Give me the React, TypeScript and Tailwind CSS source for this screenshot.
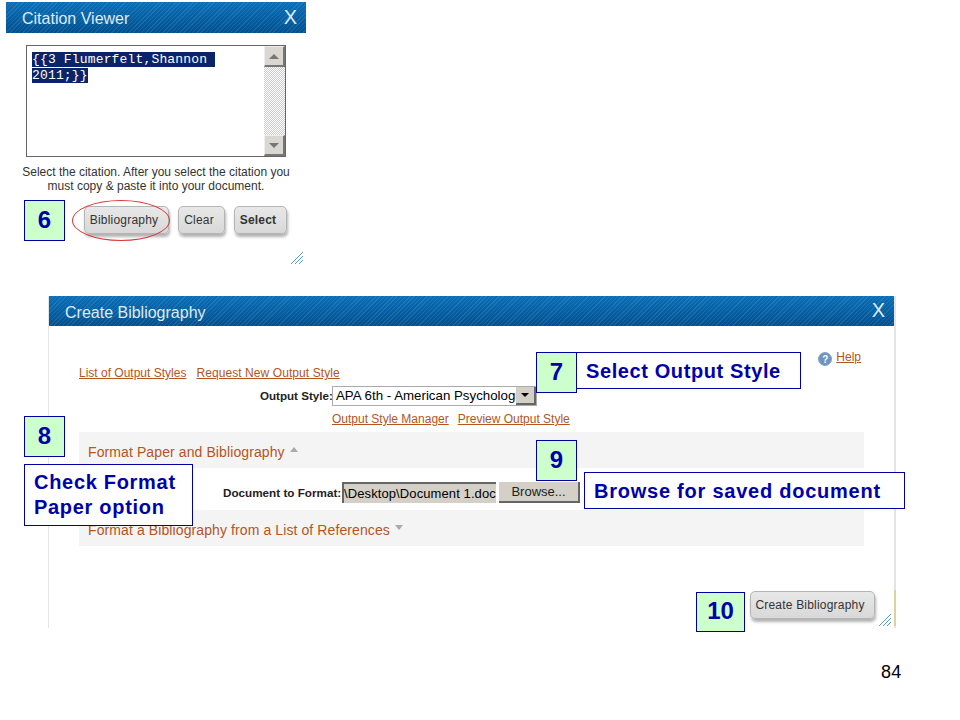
const titleBar =
  "flex items-center justify-between bg-[repeating-linear-gradient(135deg,rgba(255,255,255,0.09)_0px,rgba(255,255,255,0.09)_1px,transparent_1px,transparent_3px),linear-gradient(180deg,#0b6fb8,#00508f)] text-[#dcebf6]";

const link = "text-[12px] leading-4 text-[#b4551e] underline whitespace-nowrap";

const grayButton =
  "flex items-center justify-center rounded-[5px] border border-[#b4b4b4] bg-gradient-to-b from-[#e8e8e8] to-[#d8d8d8] pr-[5px] text-[12px] tracking-[0.2px] text-[#333] shadow-[1px_3px_3px_rgba(0,0,0,0.3)]";

// numbered green squares and blue note boxes sit on top of the slide
const stepBox =
  "absolute flex items-center justify-center border border-[#0000a0] bg-[#ccffcc] pb-[2px] text-[24px] font-bold text-[#0000aa]";
const noteBox =
  "absolute flex items-center border border-[#0000a0] bg-white pl-[9px] text-[20px] leading-[25px] font-bold text-[#0000aa]";

const ResizeGrip = ({ className }: { className: string }) => (
  <svg className={className} width="12" height="12" viewBox="0 0 12 12" fill="none" stroke="#5b9bd0" strokeWidth="1">
    <path d="M0 12 L12 0 M4 12 L12 4 M8 12 L12 8" />
  </svg>
);

const ScrollArrow = ({ up }: { up?: boolean }) => (
  <div className="flex h-[21px] w-[21px] items-center justify-center border-t border-l border-t-[#eee] border-l-[#eee] border-r-2 border-b-2 border-r-[#777] border-b-[#777] bg-[#d9d7d0]">
    <div
      className={
        up
          ? "h-0 w-0 border-x-[5px] border-b-[5px] border-x-transparent border-b-[#777]"
          : "h-0 w-0 border-x-[5px] border-t-[5px] border-x-transparent border-t-[#777]"
      }
    />
  </div>
);

const CitationViewer = () => (
  <div className="absolute top-[2px] left-[6px] h-[264px] w-[300px]">
    <div className={`${titleBar} h-[31px] pr-[9px] pl-4`}>
      <span className="pt-[3px] text-[16px]">Citation Viewer</span>
      <span className="-mt-[1px] text-[20px]">X</span>
    </div>
    <div className="mt-3 ml-5 flex h-[112px] w-[260px] justify-between border border-[#666] bg-white">
      <div className="w-[190px] pt-[6px] pl-[5px] font-['Liberation_Mono',monospace] text-[13px] leading-4 tracking-[0.16px] text-white">
        <span className="bg-[#0a246a] pr-2 whitespace-pre">{"{{3 Flumerfelt,Shannon"}</span>
        <br />
        <span className="bg-[#0a246a] whitespace-pre">{"2011;}}"}</span>
      </div>
      <div className="flex w-[21px] flex-col justify-between bg-[conic-gradient(#ccc_25%,#fff_0_50%,#ccc_0_75%,#fff_0)] bg-[length:2px_2px]">
        <ScrollArrow up />
        <ScrollArrow />
      </div>
    </div>
    <p className="mt-2 text-center text-[12px] leading-[14px] text-[#333]">
      Select the citation. After you select the citation you
      <br />
      must copy &amp; paste it into your document.
    </p>
    <div className="mt-[13px] ml-[78px] flex gap-[9px]">
      <button className={`${grayButton} h-[28px] w-[85px]`}>Bibliography</button>
      <button className={`${grayButton} h-[28px] w-[47px]`}>Clear</button>
      <button className={`${grayButton} h-[28px] w-[53px] font-bold`}>Select</button>
    </div>
    <ResizeGrip className="absolute right-[3px] bottom-[2px]" />
  </div>
);

const CreateBibliography = () => (
  <div className="absolute top-[296px] left-[48px] h-[332px] w-[848px] border-x border-x-[#e4e4e4] border-r-2">
    <div className={`${titleBar} h-[30px] pr-[9px] pl-4`}>
      <span className="pt-[3px] text-[16px]">Create Bibliography</span>
      <span className="-mt-[2px] text-[20px]">X</span>
    </div>

    <div className="flex items-start justify-between pt-[22px] pr-[33px] pl-[30px]">
      <div className="mt-[17px] flex gap-[10px]">
        <span className={link}>List of Output Styles</span>
        <span className={`${link} tracking-[0.08px]`}>Request New Output Style</span>
      </div>
      <div className="flex items-start gap-1 pt-[1px]">
        <div className="mt-[3px] flex h-[14px] w-[14px] items-center justify-center rounded-full border border-[#8aa4c4] bg-[#6f94c2] text-[10px] font-bold text-white">
          ?
        </div>
        <span className={link}>Help</span>
      </div>
    </div>

    <div className="mt-[4px] flex h-[20px] items-center pt-[1px] pl-[211px]">
      <span className="w-[72px] pt-[1px] text-[11.6px] font-bold text-[#222] whitespace-nowrap">Output Style:</span>
      <div className="flex h-[20px] w-[205px] items-center justify-between border border-[#aaa] bg-white pl-[3px]">
        <span className="w-[180px] overflow-hidden text-[13.3px] whitespace-nowrap text-black">
          APA 6th - American Psychological
        </span>
        <div className="flex h-[18px] w-[20px] items-center justify-center border-r-2 border-b-2 border-r-[#666] border-b-[#666] bg-[#d4d0c8]">
          <div className="h-0 w-0 border-x-[4px] border-t-[4px] border-x-transparent border-t-black" />
        </div>
      </div>
    </div>

    <div className="mt-[6px] flex gap-[9px] pl-[283px]">
      <span className={link}>Output Style Manager</span>
      <span className={link}>Preview Output Style</span>
    </div>

    <div className="mt-[5px] ml-[30px] flex h-[36px] w-[785px] items-center gap-[5px] bg-[#f4f4f4] pt-[4px] pl-[9px]">
      <span className="text-[14px] tracking-[0.1px] text-[#b4551e]">Format Paper and Bibliography</span>
      <div className="mb-[5px] h-0 w-0 border-x-[4px] border-b-[5px] border-x-transparent border-b-[#aaa]" />
    </div>

    <div className="flex h-[42px] items-start pt-[14px] pl-[174px]">
      <span className="w-[119px] text-[11.7px] leading-[21px] font-bold text-[#222] whitespace-nowrap">
        Document to Format:
      </span>
      <div className="flex h-[21px] w-[154px] items-center overflow-hidden border-t-2 border-l-2 border-t-[#666] border-l-[#666] bg-[#d4d0c8] text-[13px] tracking-[0.1px] whitespace-nowrap text-black">
        \Desktop\Document 1.doc
      </div>
      <div className="ml-[3px] flex h-[21px] w-[81px] items-center justify-center border-r-2 border-b-2 border-r-[#666] border-b-[#666] bg-[#d4d0c8] text-[13px] text-[#222]">
        Browse...
      </div>
    </div>

    <div className="ml-[30px] flex h-[36px] w-[785px] items-center gap-[5px] bg-[#f4f4f4] pt-[4px] pl-[9px]">
      <span className="text-[14px] tracking-[0.1px] text-[#b4551e]">Format a Bibliography from a List of References</span>
      <div className="mb-[5px] h-0 w-0 border-x-[4px] border-t-[5px] border-x-transparent border-t-[#aaa]" />
    </div>

    <button className={`${grayButton} mt-[45px] ml-auto mr-[19px] h-[28px] w-[125px]`}>Create Bibliography</button>
    <ResizeGrip className="absolute right-[3px] bottom-[2px]" />
    <div className="absolute top-[294px] -right-[2px] h-[36px] w-[2px] bg-[#d9d59a]" />
  </div>
);

export default function App() {
  return (
    <div className="relative h-[720px] w-[960px] overflow-hidden bg-white font-['Liberation_Sans',Arial,sans-serif]">
      <CitationViewer />
      <CreateBibliography />

      {/* red circle round the Bibliography button */}
      <div className="absolute top-[200px] left-[72px] h-[41px] w-[98px] rounded-[50%] border border-[#d8393c]" />

      <div className={`${stepBox} top-[200px] left-[24px] h-[41px] w-[41px]`}>6</div>
      <div className={`${noteBox} top-[352px] left-[576px] h-[37px] w-[225px] pt-[1px] tracking-[0.6px]`}>Select Output Style</div>
      <div className={`${stepBox} top-[352px] left-[536px] h-[41px] w-[41px]`}>7</div>
      <div className={`${stepBox} top-[416px] left-[24px] h-[41px] w-[41px]`}>8</div>
      <div className={`${noteBox} top-[464px] left-[24px] h-[62px] w-[169px] tracking-[0.7px]`}>
        Check Format
        <br />
        Paper option
      </div>
      <div className={`${stepBox} top-[440px] left-[536px] h-[41px] w-[41px]`}>9</div>
      <div className={`${noteBox} top-[472px] left-[584px] h-[37px] w-[321px] pt-[1px] tracking-[0.76px]`}>
        Browse for saved document
      </div>
      <div className={`${stepBox} top-[592px] left-[696px] h-[40px] w-[49px]`}>10</div>

      <span className="absolute top-[659px] left-[881px] text-[18px] tracking-[0.3px] text-black">84</span>
    </div>
  );
}
